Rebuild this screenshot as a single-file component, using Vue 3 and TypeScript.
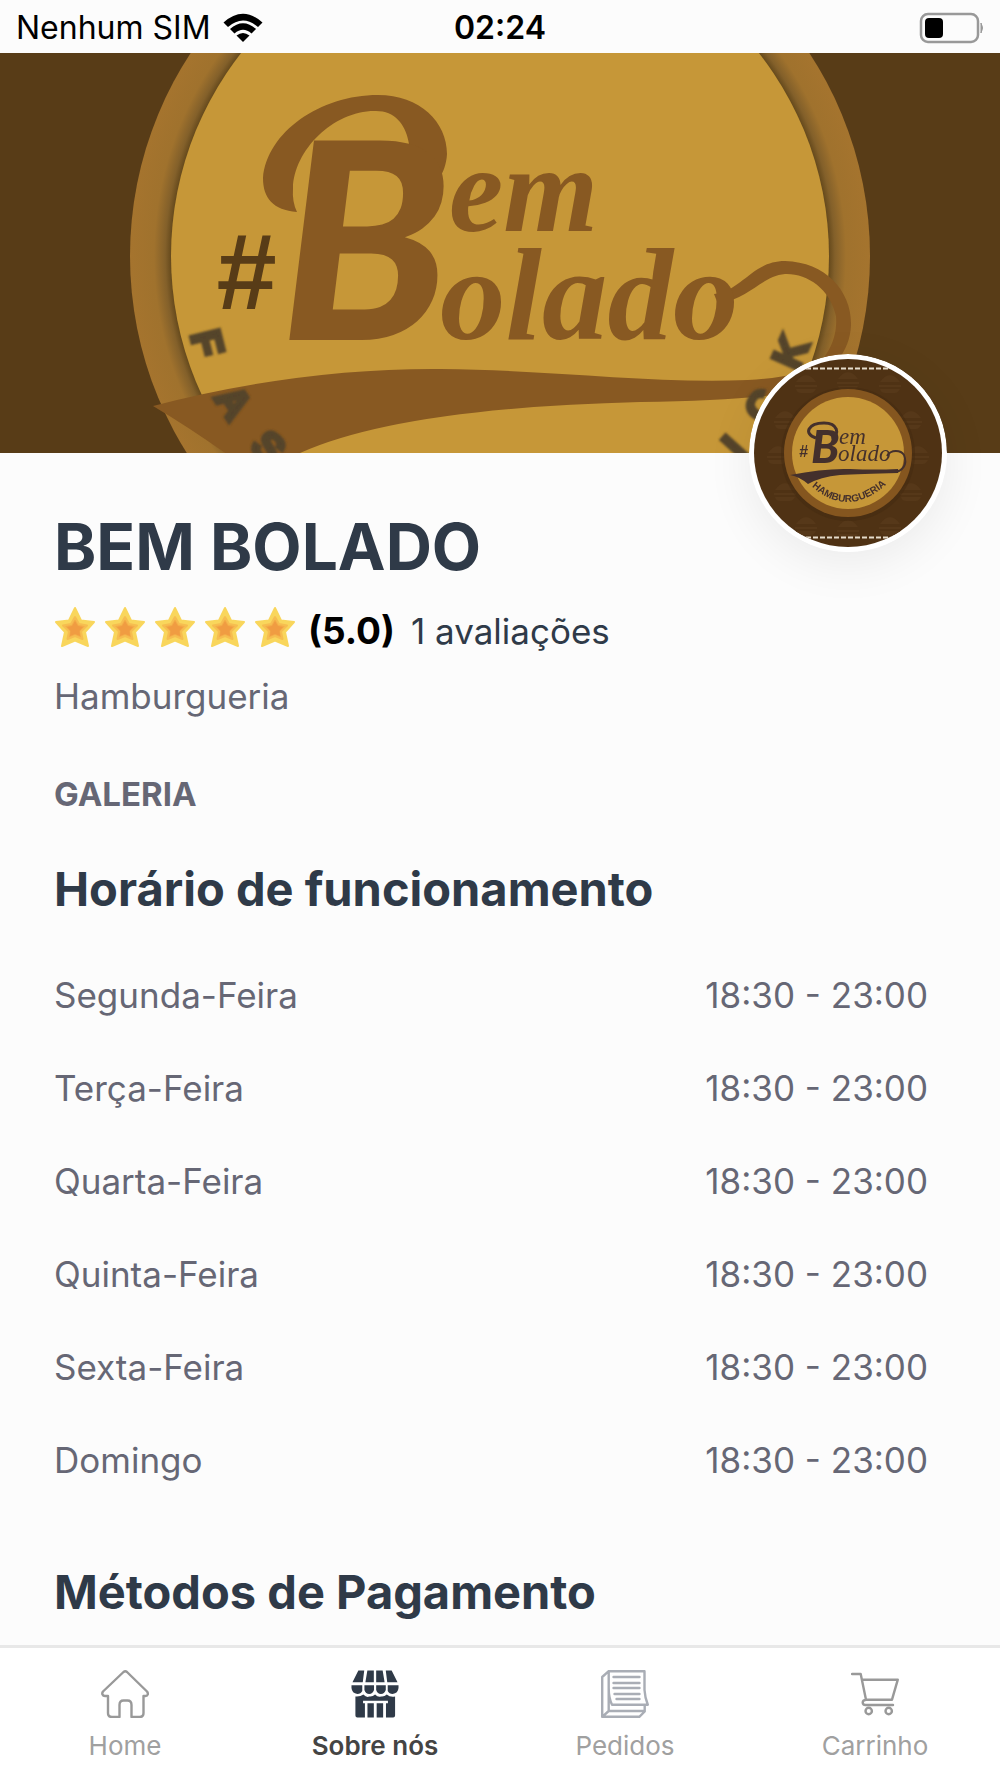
<script setup lang="ts">
interface OpeningHours {
  day: string
  time: string
}

interface Tab {
  id: 'home' | 'about' | 'orders' | 'cart'
  label: string
}

const rating = 5
const reviews = 1

const hours: OpeningHours[] = [
  'Segunda-Feira',
  'Terça-Feira',
  'Quarta-Feira',
  'Quinta-Feira',
  'Sexta-Feira',
  'Domingo',
].map((day) => ({ day, time: '18:30 - 23:00' }))

const tabs: Tab[] = [
  { id: 'home', label: 'Home' },
  { id: 'about', label: 'Sobre nós' },
  { id: 'orders', label: 'Pedidos' },
  { id: 'cart', label: 'Carrinho' },
]
const activeTab: Tab['id'] = 'about'

const orderLines = [7, 13, 18, 24, 29]
const burgers = [
  [806, 382], [848, 379], [890, 382], [785, 418], [911, 418], [778, 453],
  [918, 453], [785, 490], [911, 490], [806, 524], [848, 527], [890, 524],
]
</script>

<template>
  <div class="screen">
    <header class="status">
      <div class="carrier">
        <span>Nenhum SIM</span>
        <svg class="wifi" viewBox="0 0 40 30" aria-hidden="true">
          <path d="M0.500 9.500 Q20 -8 39.500 9.500 L35 14 Q20 1 5 14 Z" />
          <path d="M7 16 Q20 4.500 33 16 L28.500 20.500 Q20 13 11.500 20.500 Z" />
          <path d="M13.500 22.500 Q20 17.500 26.500 22.500 L20 29 Z" />
        </svg>
      </div>
      <time class="clock">02:24</time>
      <svg class="battery" viewBox="0 0 66 32" aria-hidden="true">
        <rect x="3" y="2" width="57" height="28" rx="7" fill="none" stroke="#999" stroke-width="2.500" />
        <rect x="7" y="6" width="18" height="20" rx="4" />
        <path d="M63 11 Q66 16 63 21 Z" fill="#999" stroke="#999" />
      </svg>
    </header>

    <div class="hero">
      <svg class="banner" viewBox="0 53 1000 400" preserveAspectRatio="xMidYMid slice" role="img" aria-label="Bem Bolado">
        <defs>
          <radialGradient id="ring" gradientUnits="userSpaceOnUse" cx="500" cy="256" r="370">
            <stop offset="0.885" stop-color="#5e4419" />
            <stop offset="0.905" stop-color="#83602a" />
            <stop offset="0.935" stop-color="#a0722d" />
            <stop offset="1" stop-color="#a5742e" />
          </radialGradient>
          <filter id="soft" x="-30%" y="-30%" width="160%" height="160%">
            <feGaussianBlur stdDeviation="1" />
          </filter>
        </defs>
        <rect y="53" width="1000" height="400" fill="#583c17" />
        <circle cx="500" cy="256" r="370" fill="url(#ring)" />
        <path d="M180 420 L225 453 H330 V390 H230 Z" fill="#a0722d" />
        <circle cx="500" cy="256" r="329" fill="#c69738" />
        <g fill="#885922">
          <path d="M153 406 Q300 368 440 369 C560 370 650 384 748 380 Q800 377 826 364 L815 388 Q770 400 640 402 Q400 408 300 453 H225 Q190 428 153 406 Z" />
          <path d="M714 294 C742 291 752 261 785 261 C826 262 852 292 851 325 C850 352 832 372 805 385 L802 378 C826 362 838 340 836 316 C830 288 806 273 785 274 C762 276 752 297 718 304 Z" />
          <path d="M297 212 C273 210 263 198 263 178 C267 132 320 95 378 95 C420 95 447 122 447 154 C446 174 434 190 416 198 L404 184 C415 165 414 111 376 111 C334 110 294 150 293 188 Q292 202 297 212 Z" />
          <text class="script-cap" x="280" y="340" font-size="275">B</text>
          <text class="script" x="449" y="231" font-size="122">em</text>
          <text class="script" x="440" y="339" font-size="131">olado</text>
        </g>
        <text class="hash" x="215" y="309" font-size="108" fill="#583c17">#</text>
        <g class="ring-text" fill="#54442b" filter="url(#soft)">
          <text transform="translate(208 343) rotate(76)" y="15">F</text>
          <text transform="translate(234 402) rotate(57)" y="15">A</text>
          <text transform="translate(269 447) rotate(45)" y="15">S</text>
          <text transform="translate(790 352) rotate(-66)" y="15">K</text>
          <text transform="translate(762 406) rotate(-58)" y="15">C</text>
          <text transform="translate(734 447) rotate(-48)" y="15">I</text>
        </g>
      </svg>

      <svg class="avatar" viewBox="749 354 198 198" role="img" aria-label="Bem Bolado Hamburgueria">
        <defs>
          <clipPath id="face"><circle cx="848" cy="453" r="94" /></clipPath>
          <path id="arc" d="M809 484 Q848 521 889 482" />
        </defs>
        <circle cx="848" cy="453" r="99" fill="#fff" />
        <g clip-path="url(#face)">
          <rect x="749" y="354" width="198" height="198" fill="#4f3214" />
          <g fill="#563819">
            <path v-for="[x, y] in burgers" :key="`${x}-${y}`" :d="`M${x - 10} ${y} q10 -14 20 0 z m-1 3 h22 v2 h-22 z m1 4 h20 q-2 4 -5 4 h-10 q-4 0 -5 -4 z`" />
          </g>
          <path d="M806 368.500 H890 M806 537.500 H890" stroke="#e6dccb" stroke-width="2" stroke-dasharray="5 2" />
        </g>
        <circle cx="848" cy="454" r="67" fill="#432a10" opacity="0.5" />
        <circle cx="848" cy="453" r="64" fill="#85561f" />
        <circle cx="848" cy="453" r="56" fill="#c69738" />
        <g fill="#44302c">
          <path d="M790 475 Q825 468 850 469 T898 469 L898 473 Q860 474 840 475 Q820 477 808 484 Q800 477 790 475 Z" />
          <path d="M887 456 C891 449 901 450 904 455 C908 465 902 471 895 472" fill="none" stroke="#44302c" stroke-width="2" />
          <path d="M816 438 C803 434 808 423 824 423 C838 423 840 434 832 439" fill="none" stroke="#44302c" stroke-width="3" />
          <text class="script-cap" x="811" y="463" font-size="46">B</text>
          <text class="script-thin" x="839" y="444" font-size="23">em</text>
          <text class="script-thin" x="838" y="461" font-size="23">olado</text>
          <text class="hash" x="799" y="457" font-size="16">#</text>
          <text class="arc-text"><textPath href="#arc" startOffset="50%">HAMBURGUERIA</textPath></text>
        </g>
      </svg>
    </div>

    <main class="content">
      <h1>BEM BOLADO</h1>
      <div class="rating">
        <div class="stars" role="img" aria-label="5 de 5 estrelas">
          <svg v-for="n in rating" :key="n" viewBox="0 0 42 42">
            <path d="M21 2 L27 14.500 L40 16 L31 26 L34 40 L21 34.500 L8 40 L11 26 L2 16 L15 14.500 Z" fill="#f9d65c" stroke="#f9d65c" stroke-width="2" stroke-linejoin="round" />
            <path d="M21 11 L25 18 L33 19.500 L27 25.500 L28.500 33 L21 30 L13.500 33 L15 25.500 L9 19.500 L17 18 Z" fill="#f4ad48" stroke="#f6bd50" stroke-width="2" stroke-linejoin="round" />
            <path d="M21 15 L24 20 L29 21 L25.500 25 L26 30 L21 28 L16 30 L16.500 25 L13 21 L18 20 Z" fill="#f09c42" />
          </svg>
        </div>
        <strong>({{ rating.toFixed(1) }})</strong>
        <span>{{ reviews }} avaliações</span>
      </div>
      <p class="category">Hamburgueria</p>
      <h3>GALERIA</h3>

      <h2>Horário de funcionamento</h2>
      <table>
        <tbody>
          <tr v-for="row in hours" :key="row.day">
            <th scope="row">{{ row.day }}</th>
            <td>{{ row.time }}</td>
          </tr>
        </tbody>
      </table>

      <h2 class="payments">Métodos de Pagamento</h2>
    </main>

    <nav class="tabs">
      <a v-for="tab in tabs" :key="tab.id" :href="`#${tab.id}`" :class="{ active: tab.id === activeTab }">
        <svg v-if="tab.id === 'home'" viewBox="0 0 48 48" class="line home">
          <path d="M22.500 2 L2 21.500 C0.500 23.500 1.500 26 4 26 H7 V43 Q7 47 11 47 H18.500 V35 Q18.500 30.500 22.500 30.500 H26.500 Q30.500 30.500 30.500 35 V47 H38.500 Q42.500 47 42.500 43 V26 H44.500 C47 26 47.500 23.500 46 21.500 L26 2 Q24.300 0.600 22.500 2 Z" />
        </svg>
        <svg v-else-if="tab.id === 'about'" viewBox="0 0 49 48" class="store">
          <path d="M7.500 0 H13.500 L12 12 H1.500 Z M16.700 0 H23.300 V12 H14.700 Z M25.700 0 H32.300 L34.300 12 H25.700 Z M35.500 0 H41.500 L47.500 12 H37 Z" />
          <path d="M0.500 15 H11.500 V21 Q10 24 6.500 24 Q1 23.500 0.500 18 Z M13.700 15 H23.500 V20 Q22 24 18.600 24 Q15 24 13.700 20 Z M25.700 15 H35.500 V20 Q34 24 30.600 24 Q27 24 25.700 20 Z M37.500 15 H48.500 V18 Q48 23.500 42.500 24 Q39 24 37.500 21 Z" />
          <path d="M4.500 26.500 Q9.500 27 12.600 24.500 Q16 28 18.600 26.500 Q22 27 24.600 24.500 Q27.500 27.500 30.600 26.500 Q34 27 36.500 24.500 Q40 27.500 45 26.500 V46 Q45 48 43 48 H35.700 V33.500 H37.700 V31 H12.300 V33.500 H14.200 V48 H6.500 Q4.500 48 4.500 46 Z" />
          <path d="M16.800 33.500 H23.300 V48 H16.800 Z M26.200 33.500 H32.800 V48 H26.200 Z" />
        </svg>
        <svg v-else-if="tab.id === 'orders'" viewBox="0 0 48 48" class="line orders">
          <path d="M7.700 1.200 H43.500 V20 Q44 28 46.800 34.700 H11 Q7.700 28 7.700 18 Z M7.700 1.200 L1.200 7 V46.800 H38.300 L43.700 41.500 V35 M7.700 18 V41 H43.700 M1.200 46.800 L7.700 41" />
          <path v-for="(y, i) in orderLines" :key="y" :d="`M${i < 3 ? 12.500 : 11.500 + (i - 2) * 2} ${y} H38.500`" />
        </svg>
        <svg v-else viewBox="0 0 48 48" class="line cart">
          <path d="M1 4 H9.700 L15 29.700 M11 9.700 H46.800 L41 29.700 H15 Q11.700 30 11.700 32.500 T14.500 35 H42" />
          <circle cx="17.700" cy="41" r="3.200" />
          <circle cx="37.700" cy="41" r="3.200" />
        </svg>
        <span>{{ tab.label }}</span>
      </a>
    </nav>
  </div>
</template>

<style>
body {
  margin: 0;
  background: #fcfcfc;
}
</style>

<style scoped>
.screen {
  display: flex;
  flex-direction: column;
  min-height: 100vh;
  background: #fcfcfc;
  color: #2f3a48;
  font-family: Inter, 'Open Sans', sans-serif;
}

.status {
  display: grid;
  grid-template-columns: 1fr auto 1fr;
  align-items: center;
  box-sizing: border-box;
  height: 53px;
  padding: 2px 16px 0;
  color: #000;
  font-size: 32px;
  line-height: 40px;
}
.carrier {
  display: flex;
  align-items: center;
  gap: 12px;
}
.wifi {
  width: 40px;
  height: 30px;
}
.clock {
  font-weight: 600;
}
.battery {
  width: 66px;
  height: 32px;
  justify-self: end;
}

.hero {
  position: relative;
}
.banner {
  display: block;
  width: 100%;
  height: 400px;
}
.avatar {
  position: absolute;
  right: 53px;
  bottom: -99px;
  width: 198px;
  height: 198px;
  border-radius: 50%;
  box-shadow: 0 12px 48px rgba(0, 0, 0, 0.07);
}
.script {
  font-family: 'Liberation Serif', serif;
  font-style: italic;
  font-weight: 700;
}
.script-cap {
  font-family: Lato, sans-serif;
  font-style: italic;
  font-weight: 900;
}
.script-thin {
  font-family: 'Liberation Serif', serif;
  font-style: italic;
}
.hash {
  font-family: 'Liberation Sans', sans-serif;
  font-style: italic;
  font-weight: 700;
}
.ring-text {
  font: 700 42px 'Liberation Sans', sans-serif;
  stroke: #54442b;
  stroke-width: 4px;
  text-anchor: middle;
}
.arc-text {
  font: 700 10px 'Liberation Sans', sans-serif;
  text-anchor: middle;
}

.content {
  flex: 1;
  padding: 56px 72px 23px 54px;
}
h1,
h2,
h3,
p {
  margin: 0;
}
h1 {
  font-size: 64px;
  font-weight: 700;
  line-height: 76px;
}
h2 {
  margin: 45px 0 29px;
  font-size: 47px;
  font-weight: 700;
  line-height: 60px;
}
h3 {
  margin-top: 54px;
  color: #666775;
  font-size: 33px;
  font-weight: 700;
  line-height: 40px;
}
.payments {
  margin: 56px 0 0;
}
.rating {
  display: flex;
  margin-top: 21px;
  font-size: 35px;
  line-height: 50px;
}
.stars {
  display: flex;
  gap: 8px;
}
.stars svg {
  width: 42px;
  height: 42px;
}
.rating strong {
  margin: 0 16px 0 12px;
  color: #000;
  font-size: 37px;
}
.category {
  margin-top: 16px;
  color: #666775;
  font-size: 35px;
  line-height: 48px;
}
table {
  width: 100%;
  border-collapse: collapse;
  color: #666775;
  font-size: 35px;
}
th,
td {
  height: 93px;
  padding: 0;
  font-weight: 400;
  text-align: left;
}
td {
  text-align: right;
}

.tabs {
  position: sticky;
  bottom: 0;
  display: grid;
  grid-template-columns: repeat(4, 1fr);
  padding: 22px 0 17px;
  border-top: 3px solid #e8e8e8;
  background: #fff;
}
.tabs a {
  display: flex;
  flex-direction: column;
  align-items: center;
  gap: 12px;
  color: #a0a0a0;
  font-size: 26px;
  line-height: 32px;
  text-decoration: none;
}
.tabs .active {
  color: #444;
  font-weight: 600;
}
.tabs svg {
  width: 48px;
  height: 48px;
}
.line {
  fill: none;
  stroke: #999;
  stroke-width: 2.4;
  stroke-linecap: round;
  stroke-linejoin: round;
}
.line.orders {
  stroke: #a9adb5;
}
.store {
  fill: #2f3a48;
}
</style>
